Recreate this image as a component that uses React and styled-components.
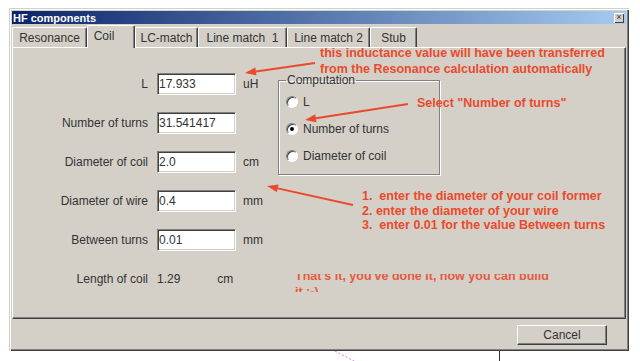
import React from 'react'
import styled, { createGlobalStyle } from 'styled-components'

const FACE = '#d4d0c8'
const RED = '#ea4a2c'
const FONT = '"Liberation Sans", Arial, sans-serif'

const GlobalStyle = createGlobalStyle`
    html, body {
        margin: 0;
        padding: 0;
        background: #fff;
    }
    body {
        font-family: ${FONT};
    }
`

const Page = styled.div`
    width: 640px;
    height: 361px;
    box-sizing: border-box;
    padding: 8px 0 0 9px;
    overflow: hidden;
`

const Window = styled.div`
    position: relative;
    width: 620px;
    height: 343px;
    box-sizing: border-box;
    padding: 3px;
    background: ${FACE};
    display: flex;
    flex-direction: column;
    box-shadow: inset 1px 1px 0 ${FACE}, inset 2px 2px 0 #fff,
        inset -1px -1px 0 #404040, inset -2px -2px 0 #808080;
`

const TitleBar = styled.div`
    height: 13px;
    display: flex;
    align-items: center;
    padding: 0 2px 0 1px;
    background: linear-gradient(to right, #0a246a, #a6caf0);
`

const Title = styled.span`
    color: #fff;
    font: bold 11px ${FONT};
`

const CloseButton = styled.div`
    margin-left: auto;
    width: 10px;
    height: 10px;
    box-sizing: border-box;
    background: ${FACE};
    box-shadow: inset 1px 1px 0 #fff, inset -1px -1px 0 #404040;
    display: flex;
    align-items: center;
    justify-content: center;
    font: 9px/1 ${FONT};
    color: #333;
`

const TabStrip = styled.div`
    position: relative;
    z-index: 1;
    display: flex;
    align-items: flex-end;
    height: 23px;
    margin-top: 1px;
    margin-bottom: -1px;
`

const Tab = styled.div`
    box-sizing: border-box;
    width: ${p => p.$w}px;
    height: ${p => (p.$active ? 23 : 20)}px;
    margin-bottom: ${p => (p.$active ? 0 : 1)}px;
    padding-right: ${p => (p.$active ? 14 : 0)}px;
    padding-bottom: ${p => (p.$active ? 2 : 0)}px;
    background: ${FACE};
    border-top: 1px solid #fff;
    border-left: 1px solid #fff;
    border-right: 1px solid #404040;
    border-radius: 2px 2px 0 0;
    box-shadow: inset -1px 0 0 #808080;
    display: flex;
    align-items: center;
    justify-content: center;
    font-size: 12px;
    color: #333;
    white-space: pre;
`

const Panel = styled.div`
    height: 272px;
    box-sizing: border-box;
    border: 1px solid;
    border-color: #fff #404040 #404040 #fff;
    box-shadow: inset -1px -1px 0 #808080;
    padding-top: 25px;
    display: flex;
    align-items: flex-start;
`

const FormGrid = styled.div`
    display: grid;
    grid-template-columns: 144px 79px 42px;
    grid-auto-rows: 22px;
    row-gap: 17px;
`

const Label = styled.div`
    align-self: center;
    text-align: right;
    padding-right: 9px;
    font-size: 12px;
    color: #333;
`

const Field = styled.input`
    box-sizing: border-box;
    width: 79px;
    height: 22px;
    margin: 0;
    padding: 0 1px;
    border: 1px solid;
    border-color: #808080 #fff #fff #808080;
    box-shadow: inset 1px 1px 0 #404040, inset -1px -1px 0 ${FACE};
    background: #fff;
    font: 12px ${FONT};
    color: #333;
    outline: none;
`

const Unit = styled.div`
    align-self: center;
    padding-left: 7px;
    font-size: 12px;
    color: #333;
`

const Readout = styled.div`
    grid-column: 2 / 4;
    align-self: center;
    display: flex;
    font-size: 12px;
    color: #333;
`

const ReadoutUnit = styled.span`
    margin-left: 37px;
`

const Group = styled.fieldset`
    width: 162px;
    height: 102px;
    box-sizing: border-box;
    margin: 0;
    padding: 0 0 0 7px;
    border: 1px solid #808080;
    box-shadow: inset 1px 1px 0 #fff, 1px 1px 0 #fff;
`

const Legend = styled.legend`
    padding: 0 1px;
    font-size: 12px;
    line-height: 14px;
    color: #333;
`

const RadioList = styled.div`
    display: flex;
    flex-direction: column;
    gap: 11px;
    padding-top: 7px;
`

const RadioRow = styled.div`
    display: flex;
    align-items: center;
    gap: 5px;
    height: 16px;
    font-size: 12px;
    color: #333;
`

const RadioDot = styled.span`
    position: relative;
    width: 12px;
    height: 12px;
    box-sizing: border-box;
    border-radius: 50%;
    border: 1px solid;
    border-color: #808080 #fff #fff #808080;
    box-shadow: inset 1px 1px 0 #404040;
    background: #fff;
    &::after {
        content: '';
        display: ${p => (p.$checked ? 'block' : 'none')};
        position: absolute;
        left: 3px;
        top: 3px;
        width: 4px;
        height: 4px;
        border-radius: 50%;
        background: #000;
    }
`

const Footer = styled.div`
    display: flex;
    justify-content: flex-end;
    padding: 6px 19px 0 0;
`

const Button = styled.div`
    width: 90px;
    height: 20px;
    box-sizing: border-box;
    background: ${FACE};
    border: 1px solid;
    border-color: #fff #404040 #404040 #fff;
    box-shadow: inset -1px -1px 0 #808080;
    display: flex;
    align-items: center;
    justify-content: center;
    font-size: 12px;
    color: #333;
`

const Note = styled.div`
    position: absolute;
    left: ${p => p.$x}px;
    top: ${p => p.$y}px;
    color: ${p => p.$tone || RED};
    font: bold 12.5px/${p => p.$lh || 16}px ${FONT};
    white-space: pre;
`

const ClipBox = styled.div`
    position: absolute;
    left: ${p => p.$x}px;
    top: ${p => p.$y}px;
    height: ${p => p.$h}px;
    overflow: hidden;
`

const ClippedText = styled.div`
    margin-top: -6px;
    color: #e65a3e;
    font: bold 12.5px/16px ${FONT};
    white-space: pre;
`

const Overlay = styled.svg`
    position: absolute;
    left: 0;
    top: 0;
    pointer-events: none;
`

const Backdrop = styled.svg`
    display: block;
    margin-left: -9px;
`

const tabs = [
    { label: 'Resonance', w: 75 },
    { label: 'Coil', w: 48, active: true },
    { label: 'LC-match', w: 63 },
    { label: 'Line match  1', w: 89 },
    { label: 'Line match 2', w: 83 },
    { label: 'Stub', w: 47 },
]

const fields = [
    { label: 'L', value: '17.933', unit: 'uH' },
    { label: 'Number of turns', value: '31.541417', unit: '' },
    { label: 'Diameter of coil', value: '2.0', unit: 'cm' },
    { label: 'Diameter of wire', value: '0.4', unit: 'mm' },
    { label: 'Between turns', value: '0.01', unit: 'mm' },
]

const options = [
    { label: 'L' },
    { label: 'Number of turns', checked: true },
    { label: 'Diameter of coil' },
]

const arrows = [
    [306, 55, 236, 65],
    [399, 96, 296, 112],
    [344, 197, 258, 178],
]

const Arrow = ({ from, to }) => {
    const [x1, y1] = from
    const [x2, y2] = to
    const len = Math.hypot(x2 - x1, y2 - y1)
    const dx = (x2 - x1) / len
    const dy = (y2 - y1) / len
    const bx = x2 - dx * 11
    const by = y2 - dy * 11
    const nx = -dy * 4
    const ny = dx * 4
    return (
        <g>
            <line x1={x1} y1={y1} x2={bx} y2={by} stroke={RED} strokeWidth="2" />
            <polygon points={`${x2},${y2} ${bx + nx},${by + ny} ${bx - nx},${by - ny}`} fill={RED} />
        </g>
    )
}

const App = () => {
    return (
        <Page>
            <GlobalStyle />
            <Window>
                <TitleBar>
                    <Title>HF components</Title>
                    <CloseButton>×</CloseButton>
                </TitleBar>
                <TabStrip>
                    {tabs.map(t => (
                        <Tab key={t.label} $w={t.w} $active={t.active}>{t.label}</Tab>
                    ))}
                </TabStrip>
                <Panel>
                    <FormGrid>
                        {fields.map(f => (
                            <React.Fragment key={f.label}>
                                <Label>{f.label}</Label>
                                <Field defaultValue={f.value} />
                                <Unit>{f.unit}</Unit>
                            </React.Fragment>
                        ))}
                        <Label>Length of coil</Label>
                        <Readout>
                            1.29<ReadoutUnit>cm</ReadoutUnit>
                        </Readout>
                    </FormGrid>
                    <Group>
                        <Legend>Computation</Legend>
                        <RadioList>
                            {options.map(o => (
                                <RadioRow key={o.label}>
                                    <RadioDot $checked={o.checked} />
                                    {o.label}
                                </RadioRow>
                            ))}
                        </RadioList>
                    </Group>
                </Panel>
                <Footer>
                    <Button>Cancel</Button>
                </Footer>

                <Note $x={311} $y={37}>
                    {'this inductance value will have been transferred\nfrom the Resonance calculation automatically'}
                </Note>
                <Note $x={408} $y={87}>Select "Number of turns"</Note>
                <Note $x={353} $y={181} $lh={14.5}>
                    {'1.  enter the diameter of your coil former\n2. enter the diameter of your wire\n3.  enter 0.01 for the value Between turns'}
                </Note>
                <ClipBox $x={286} $y={266} $h={18}>
                    <ClippedText>{"That's it, you've done it, now you can build\nit :-)"}</ClippedText>
                </ClipBox>
                <Overlay width="620" height="343">
                    {arrows.map(([a, b, c, d], i) => (
                        <Arrow key={i} from={[a, b]} to={[c, d]} />
                    ))}
                </Overlay>
            </Window>
            <Backdrop width="640" height="10">
                <line x1="335" y1="0" x2="354" y2="10" stroke="#e070e0" strokeWidth="1" strokeDasharray="2 2" />
                <line x1="499.5" y1="0" x2="499.5" y2="10" stroke="#333" strokeWidth="1" />
            </Backdrop>
        </Page>
    )
}

export default App
